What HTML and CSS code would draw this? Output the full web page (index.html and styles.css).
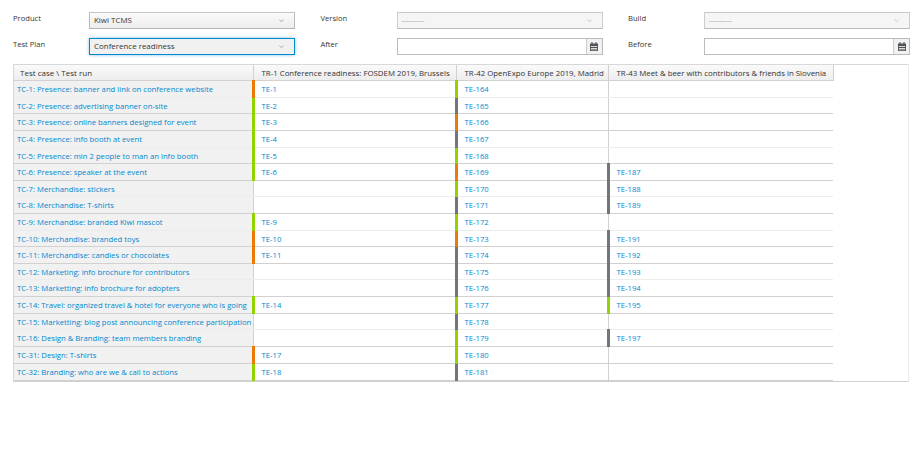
FILE: index.html
```html
<!DOCTYPE html>
<html lang="en">
<head>
<meta charset="utf-8">
<title>Test matrix</title>
<link rel="stylesheet" href="styles.css">
</head>
<body>
<form class="filters">
  <div class="field"><label>Product</label>
    <div class="select"><span>Kiwi TCMS</span><svg class="chev" viewBox="0 0 6 4"><path d="M.5 .7 3 3.2 5.5 .7"/></svg></div></div>
  <div class="field"><label>Version</label>
    <div class="select disabled"><span>---------</span><svg class="chev" viewBox="0 0 6 4"><path d="M.5 .7 3 3.2 5.5 .7"/></svg></div></div>
  <div class="field"><label>Build</label>
    <div class="select disabled"><span>---------</span><svg class="chev" viewBox="0 0 6 4"><path d="M.5 .7 3 3.2 5.5 .7"/></svg></div></div>
  <div class="field"><label>Test Plan</label>
    <div class="select focused"><span>Conference readiness</span><svg class="chev" viewBox="0 0 6 4"><path d="M.5 .7 3 3.2 5.5 .7"/></svg></div></div>
  <div class="field"><label>After</label>
    <div class="date"><div class="date-input"></div><div class="addon"><svg class="cal" viewBox="0 0 8 9"><path d="M0 1.5h8V9H0z"/><path class="gap" d="M.8 4h6.4v1H.8zM.8 6h6.4v1H.8zM.8 7.6h6.4v.6H.8z"/><path d="M1.5 0h1v2h-1zM5.5 0h1v2h-1z"/></svg></div></div></div>
  <div class="field"><label>Before</label>
    <div class="date"><div class="date-input"></div><div class="addon"><svg class="cal" viewBox="0 0 8 9"><path d="M0 1.5h8V9H0z"/><path class="gap" d="M.8 4h6.4v1H.8zM.8 6h6.4v1H.8zM.8 7.6h6.4v.6H.8z"/><path d="M1.5 0h1v2h-1zM5.5 0h1v2h-1z"/></svg></div></div></div>
</form>
<div class="matrix">
<table>
<colgroup><col class="c0"><col class="c1"><col class="c2"><col class="c3"></colgroup>
<thead><tr><th class="corner">Test case \ Test run</th><th>TR-1 Conference readiness: FOSDEM 2019, Brussels</th><th>TR-42 OpenExpo Europe 2019, Madrid</th><th>TR-43 Meet &amp; beer with contributors &amp; friends in Slovenia</th></tr></thead>
<tbody>
<tr class="soft"><th><a href="#">TC-1: Presence: banner and link on conference website</a></th><td class="o"><a href="#">TE-1</a></td><td class="g"><a href="#">TE-164</a></td><td></td></tr>
<tr class="short"><th><a href="#">TC-2: Presence: advertising banner on-site</a></th><td class="g"><a href="#">TE-2</a></td><td class="k"><a href="#">TE-165</a></td><td></td></tr>
<tr><th><a href="#">TC-3: Presence: online banners designed for event</a></th><td class="g"><a href="#">TE-3</a></td><td class="o"><a href="#">TE-166</a></td><td></td></tr>
<tr class="soft"><th><a href="#">TC-4: Presence: info booth at event</a></th><td class="g"><a href="#">TE-4</a></td><td class="k"><a href="#">TE-167</a></td><td></td></tr>
<tr class="short"><th><a href="#">TC-5: Presence: min 2 people to man an info booth</a></th><td class="g"><a href="#">TE-5</a></td><td class="g"><a href="#">TE-168</a></td><td></td></tr>
<tr><th><a href="#">TC-6: Presence: speaker at the event</a></th><td class="g"><a href="#">TE-6</a></td><td class="o"><a href="#">TE-169</a></td><td class="k"><a href="#">TE-187</a></td></tr>
<tr class="short soft"><th><a href="#">TC-7: Merchandise: stickers</a></th><td></td><td class="g"><a href="#">TE-170</a></td><td class="k"><a href="#">TE-188</a></td></tr>
<tr><th><a href="#">TC-8: Merchandise: T-shirts</a></th><td></td><td class="k"><a href="#">TE-171</a></td><td class="k"><a href="#">TE-189</a></td></tr>
<tr class="soft"><th><a href="#">TC-9: Merchandise: branded Kiwi mascot</a></th><td class="g"><a href="#">TE-9</a></td><td class="g"><a href="#">TE-172</a></td><td></td></tr>
<tr class="short"><th><a href="#">TC-10: Merchandise: branded toys</a></th><td class="o"><a href="#">TE-10</a></td><td class="o"><a href="#">TE-173</a></td><td class="k"><a href="#">TE-191</a></td></tr>
<tr><th><a href="#">TC-11: Merchandise: candies or chocolates</a></th><td class="o"><a href="#">TE-11</a></td><td class="k"><a href="#">TE-174</a></td><td class="k"><a href="#">TE-192</a></td></tr>
<tr class="short soft"><th><a href="#">TC-12: Marketing: info brochure for contributors</a></th><td></td><td class="k"><a href="#">TE-175</a></td><td class="k"><a href="#">TE-193</a></td></tr>
<tr><th><a href="#">TC-13: Marketting: info brochure for adopters</a></th><td></td><td class="k"><a href="#">TE-176</a></td><td class="k"><a href="#">TE-194</a></td></tr>
<tr><th><a href="#">TC-14: Travel: organized travel &amp; hotel for everyone who is going</a></th><td class="g"><a href="#">TE-14</a></td><td class="g"><a href="#">TE-177</a></td><td class="g"><a href="#">TE-195</a></td></tr>
<tr class="short soft"><th><a href="#">TC-15: Marketting: blog post announcing conference participation</a></th><td></td><td class="k"><a href="#">TE-178</a></td><td></td></tr>
<tr><th><a href="#">TC-16: Design &amp; Branding: team members branding</a></th><td></td><td class="g"><a href="#">TE-179</a></td><td class="k"><a href="#">TE-197</a></td></tr>
<tr><th><a href="#">TC-31: Design: T-shirts</a></th><td class="o"><a href="#">TE-17</a></td><td class="g"><a href="#">TE-180</a></td><td></td></tr>
<tr><th><a href="#">TC-32: Branding: who are we &amp; call to actions</a></th><td class="g"><a href="#">TE-18</a></td><td class="k"><a href="#">TE-181</a></td><td></td></tr>
</tbody>
</table>
</div>
</body>
</html>
```
FILE: styles.css
```css
html, body { margin: 0; padding: 0; background: #fff; }
body { font-family: "Open Sans", "Noto Sans", sans-serif; font-size: 7.7px; color: #363636; }

.filters {
  display: grid;
  grid-template-columns: repeat(3, 1fr);
  column-gap: 25.5px;
  row-gap: 10px;
  padding: 12px 13px 10px;
}
.field { display: grid; grid-template-columns: 76px 206px; align-items: start; height: 16px; }
.field label { font-size: 7.6px; line-height: 13px; }

.select {
  box-sizing: border-box;
  height: 17px;
  display: flex;
  align-items: center;
  justify-content: space-between;
  padding: 0 10px 1px 4px;
  font-size: 7.95px;
  border: 1px solid #bbb;
  border-color: #c4c4c4 #bbb #b4b4b4;
  background: linear-gradient(#fafafa, #ededed);
}
.select.disabled { color: #9a9a9a; background: #f5f5f5; border-color: #c8c8c8 #ccc #bbb; }
.select.focused { border-color: #0088ce; box-shadow: 0 0 3px rgba(0, 136, 206, .5); background: #f1f1f1; }
.chev { width: 5px; height: 3.4px; margin-top: 2px; fill: none; stroke: #8b8d8f; stroke-width: .9; }
.disabled .chev { stroke: #bbb; }

.date { display: flex; height: 17px; box-sizing: border-box; border: 1px solid #bbb; background: #fff; }
.date-input { flex: 1; }
.addon { width: 15px; display: flex; align-items: center; justify-content: center; background: #f1f1f1; border-left: 1px solid #ccc; }
.cal { width: 8px; height: 9px; fill: #4d5258; }
.cal .gap { fill: #d8d8d8; }

.matrix {
  margin: 0 13px;
  height: 316px;
  border: 1px solid #d8d8d8;
  border-right-color: #ececec;
  border-bottom-color: #cfcfcf;
}
table { border-collapse: collapse; table-layout: fixed; width: 819px; }
.c0 { width: 239px; }
.c1 { width: 203px; }
.c2 { width: 152px; }
.c3 { width: 225px; }
thead th {
  height: 15px;
  padding: 0 0 0 8px;
  font-size: 7.85px;
  font-weight: 400;
  text-align: left;
  white-space: nowrap;
  color: #333;
  background: linear-gradient(#fafafa, #ededed);
  border: 1px solid #d1d1d1;
  border-top: 0;
}
thead .corner { padding-left: 6px; font-size: 8px; }
tbody th, tbody td { padding: 0; height: 16px; white-space: nowrap; border-bottom: 1px solid #d1d1d1; font-weight: 400; text-align: left; }
tbody tr.short th, tbody tr.short td { height: 15px; }
tbody tr.soft th, tbody tr.soft td { border-bottom-color: #ececec; }
tbody th { padding-left: 3px; background: #f1f1f1; border-right: 1px solid #d1d1d1; }
tbody td { padding-left: 7px; background: #fff; border-left: 1px solid #d1d1d1; }
thead th:first-child, tbody th { border-left: 0; }
tbody td.g { border-left: 3px solid #92d400; }
tbody td.o { border-left: 3px solid #ec7a08; }
tbody td.k { border-left: 3px solid #72767b; }
tbody td:last-child { border-right: 0; }
thead th:last-child { border-right: 1px solid #d1d1d1; }
a { color: #0088ce; text-decoration: none; }
```
